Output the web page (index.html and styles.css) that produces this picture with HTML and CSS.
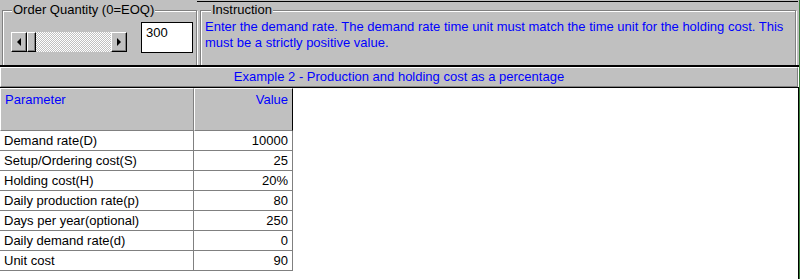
FILE: index.html
```html
<!DOCTYPE html>
<html lang="en">
<head>
  <meta charset="UTF-8">
  <meta name="viewport" content="width=device-width, initial-scale=1.0">
  <title>EOQ - Production</title>
  <link rel="stylesheet" href="styles.css">
</head>
<body>
  <div class="app">
    <div class="top">
      <fieldset class="group qty">
        <legend>Order Quantity (0=EOQ)</legend>
        <div class="qty-body">
          <div class="scroll">
            <span class="sbtn"><span class="arrow left"></span></span>
            <span class="thumb"></span>
            <span class="track"></span>
            <span class="sbtn"><span class="arrow right"></span></span>
          </div>
          <div class="edit">300</div>
        </div>
      </fieldset>
      <fieldset class="group instr">
        <legend>Instruction</legend>
        <p>Enter the demand rate. The demand rate time unit must match the time unit for the holding cost. This must be a strictly positive value.</p>
      </fieldset>
    </div>

    <div class="title">Example 2 - Production and holding cost as a percentage</div>

    <div class="sheet">
      <table>
        <tr>
          <th class="param">Parameter</th>
          <th class="value">Value</th>
        </tr>
        <tr><td class="param">Demand rate(D)</td><td class="value">10000</td></tr>
        <tr><td class="param">Setup/Ordering cost(S)</td><td class="value">25</td></tr>
        <tr><td class="param">Holding cost(H)</td><td class="value">20%</td></tr>
        <tr><td class="param">Daily production rate(p)</td><td class="value">80</td></tr>
        <tr><td class="param">Days per year(optional)</td><td class="value">250</td></tr>
        <tr><td class="param">Daily demand rate(d)</td><td class="value">0</td></tr>
        <tr><td class="param">Unit cost</td><td class="value">90</td></tr>
      </table>
    </div>
  </div>
</body>
</html>
```

FILE: styles.css
```css
body {
  margin: 0;
  background-color: #fff;
  font-family: "Liberation Sans", Arial, sans-serif;
  font-size: 13px;
  color: #000;
}

.app {
  width: 799px;
  height: 279px;
  border-right: 1px solid #3a7d3a;
  display: flex;
  flex-direction: column;
  overflow: hidden;
}

/* top control strip */
.top {
  height: 65px;
  flex: none;
  display: flex;
  padding: 0 0 0 2px;
  overflow: hidden;
  border-bottom: 2px solid #000;
  background: linear-gradient(#000, #000) 197px 1px / 601px 1px no-repeat, #c0c0c0;
}

.group {
  margin: 3px 0 0 0;
  padding: 0;
  height: 80px;
  border: 1px solid #808080;
  box-shadow: inset 1px 1px 0 #fff, 1px 1px 0 #fff;
  box-sizing: border-box;
}

.group legend {
  padding: 0 1px;
  line-height: 14px;
  background-color: #c0c0c0;
}

.qty {
  width: 195px;
}

.qty legend {
  margin-left: 9px;
}

.qty-body {
  display: flex;
  align-items: flex-end;
  margin-top: 5px;
  padding-left: 8px;
}

.scroll {
  display: flex;
  height: 20px;
  margin-bottom: 1px;
}

.sbtn, .thumb {
  display: flex;
  align-items: center;
  justify-content: center;
  width: 16px;
  box-sizing: border-box;
  background-color: #c0c0c0;
  border: 1px solid;
  border-color: #fff #000 #000 #fff;
  box-shadow: inset -1px -1px 0 #808080;
}

.thumb {
  width: 9px;
}

.track {
  width: 75px;
  background-color: #fff;
  background-image: repeating-conic-gradient(#c0c0c0 0 25%, #fff 0 50%);
  background-size: 2px 2px;
}

.arrow {
  width: 0;
  height: 0;
  border-top: 4px solid transparent;
  border-bottom: 4px solid transparent;
}

.arrow.left {
  border-right: 4px solid #000;
}

.arrow.right {
  border-left: 4px solid #000;
}

.edit {
  width: 52px;
  height: 31px;
  margin-left: 14px;
  box-sizing: border-box;
  border: 1px solid #000;
  background-color: #fff;
  padding: 3px 0 0 4px;
  line-height: 14px;
}

.instr {
  width: 596px;
  margin-left: 3px;
}

.instr legend {
  margin-left: 10px;
}

.instr p {
  margin: 2px 0 0 4px;
  color: #0000ff;
  line-height: 16px;
  width: 588px;
}

/* sheet title */
.title {
  flex: none;
  width: 798px;
  height: 20px;
  box-sizing: border-box;
  border: 1px solid;
  border-color: #fff #808080 #808080 #fff;
  background-color: #c0c0c0;
  color: #0000ff;
  text-align: center;
  line-height: 17px;
}

.sheet {
  flex: 1;
  border-top: 1px solid #000;
  border-right: 1px solid #000;
  background-color: #fff;
}

table {
  border-collapse: separate;
  border-spacing: 0;
}

th {
  height: 43px;
  box-sizing: border-box;
  background-color: #c0c0c0;
  color: #0000ff;
  font-weight: normal;
  vertical-align: top;
  line-height: 16px;
  padding-top: 3px;
  border-top: 1px solid #fff;
  border-left: 1px solid #fff;
  border-right: 1px solid #808080;
  border-bottom: 1px solid #808080;
}

th.param {
  width: 194px;
  text-align: left;
  padding-left: 4px;
}

th.value {
  width: 99px;
  text-align: right;
  padding-right: 4px;
  border-right-color: #000;
}

td {
  height: 20px;
  box-sizing: border-box;
  padding: 0;
  line-height: 16px;
  border-bottom: 1px solid #808080;
  border-right: 1px solid #808080;
}

td.param {
  padding-left: 4px;
}

td.value {
  text-align: right;
  padding-right: 4px;
}
```
